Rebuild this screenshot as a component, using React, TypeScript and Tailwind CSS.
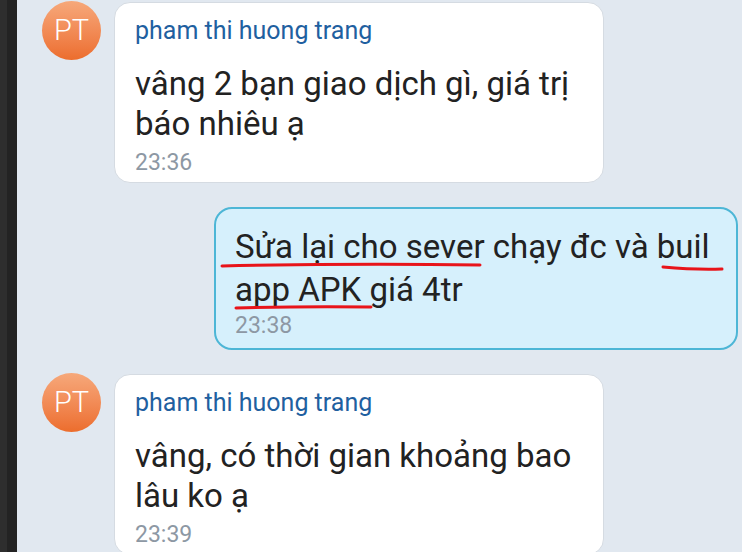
import React from 'react';

const FONT = { fontFamily: 'Roboto, "Noto Sans", sans-serif' };

function Avatar() {
  return (
    <div className="w-[59px] h-[59px] shrink-0 rounded-full bg-gradient-to-b from-[#f6a87a] to-[#ec6d2c] flex items-center justify-center text-white text-[29px] font-light">
      PT
    </div>
  );
}

function Received({ lines, time }: { lines: string[]; time: string }) {
  return (
    <div className="flex items-start">
      <div className="ml-[25px] mt-[-1px]">
        <Avatar />
      </div>
      <div className="ml-[13px] w-[490px] bg-white border border-[#d5dbe2] rounded-[16px] pl-[20px] pt-[13px] pb-[5px]">
        <div className="text-[25px] leading-[30px] text-[#1f60a0]">pham thi huong trang</div>
        <div className="mt-[18px] text-[33px] leading-[40px] text-[#222]">
          {lines.map((l, i) => (
            <div key={i}>{l}</div>
          ))}
        </div>
        <div className="mt-[5px] text-[23px] leading-[28px] text-[#8d98a4]">{time}</div>
      </div>
    </div>
  );
}

function Sent() {
  return (
    <div className="flex justify-end pr-[4px]">
      <div className="relative w-[524px] h-[143px] bg-[#d6f0fc] border-2 border-[#4db6d6] rounded-[18px] pl-[19px] pt-[16px]">
        <div className="text-[33px] leading-[43px] text-[#222]">
          <div>Sửa lại cho sever chạy đc và buil</div>
          <div>app APK giá 4tr</div>
        </div>
        <div className="mt-[1px] text-[23px] leading-[28px] text-[#8d98a4]">23:38</div>
        <svg className="absolute left-0 top-0" width="520" height="139" viewBox="0 0 520 139" fill="none">
          <path d="M6 57 Q140 54 264 56" stroke="#e8141a" strokeWidth="3" strokeLinecap="round" />
          <path d="M447 58 Q480 61 506 60" stroke="#e8141a" strokeWidth="3" strokeLinecap="round" />
          <path d="M20 99 Q90 97 155 98" stroke="#e8141a" strokeWidth="3" strokeLinecap="round" />
        </svg>
      </div>
    </div>
  );
}

export default function App() {
  return (
    <div className="w-[742px] h-[552px] flex overflow-hidden" style={FONT}>
      <div className="w-[7px] bg-[#2e2e2e]" />
      <div className="w-[10px] bg-[#232323]" />
      <div className="flex-1 bg-[#e1e8f0] pt-[2px] flex flex-col gap-[24px]">
        <Received lines={['vâng 2 bạn giao dịch gì, giá trị', 'báo nhiêu ạ']} time="23:36" />
        <Sent />
        <Received lines={['vâng, có thời gian khoảng bao', 'lâu ko ạ']} time="23:39" />
      </div>
    </div>
  );
}
